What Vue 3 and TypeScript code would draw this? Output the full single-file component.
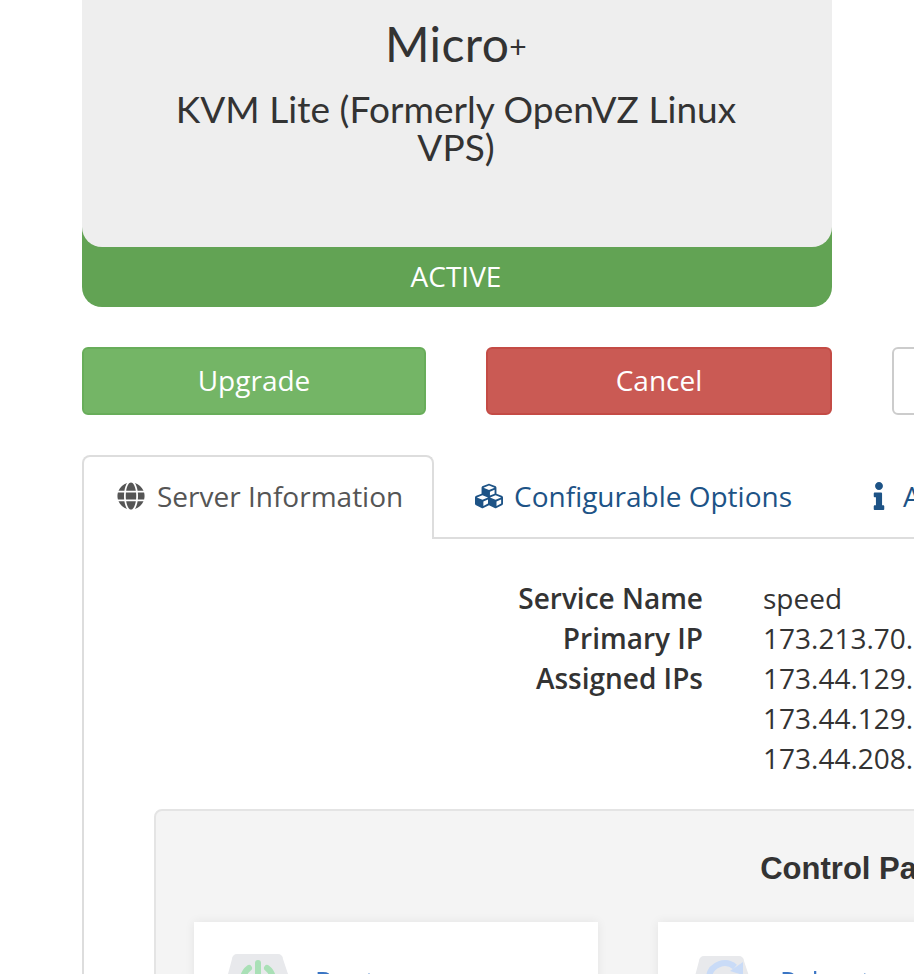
<script setup lang="ts">
const info: { label: string; value: string }[] = [
  { label: 'Service Name', value: 'speed' },
  { label: 'Primary IP', value: '173.213.70.' },
  { label: 'Assigned IPs', value: '173.44.129.' },
  { label: '', value: '173.44.129.' },
  { label: '', value: '173.44.208.' },
]
</script>

<template>
  <div class="page">
    <div class="inner">
      <section class="hero">
        <div class="hero-body">
          <h2 class="plan">Micro<span class="plus">+</span></h2>
          <h3 class="group">KVM Lite (Formerly OpenVZ Linux<br />VPS)</h3>
        </div>
        <div class="status">ACTIVE</div>
      </section>

      <div class="actions">
        <button class="btn green">Upgrade</button>
        <button class="btn red">Cancel</button>
        <button class="btn plain"></button>
      </div>

      <nav class="tabs">
        <a class="tab active">
          <svg class="ico globe" viewBox="0 0 496 512"><path fill="currentColor" d="M336.5 160C322 70.7 287.8 8 248 8s-74 62.7-88.5 152h177zM152 256c0 22.2 1.2 43.5 3.3 64h185.3c2.1-20.5 3.3-41.8 3.3-64s-1.2-43.5-3.3-64H155.3c-2.1 20.5-3.3 41.8-3.3 64zm324.7-96c-28.6-67.9-86.5-120.4-158-141.6 24.4 33.8 41.2 84.7 50 141.6h108zM177.2 18.4C105.8 39.6 47.8 92.1 19.3 160h108c8.7-56.9 25.5-107.8 49.9-141.6zM487.4 192H372.7c2.1 21 3.3 42.5 3.3 64s-1.2 43-3.3 64h114.6c5.5-20.5 8.6-41.8 8.6-64s-3.1-43.5-8.5-64zM120 256c0-21.5 1.2-43 3.3-64H8.6C3.2 212.5 0 233.8 0 256s3.2 43.5 8.6 64h114.6c-2-21-3.2-42.5-3.2-64zm39.5 96c14.5 89.3 48.7 152 88.5 152s74-62.7 88.5-152h-177zm159.3 141.6c71.4-21.2 129.4-73.7 158-141.6h-108c-8.8 56.9-25.6 107.8-50 141.6zM19.3 352c28.6 67.9 86.5 120.4 158 141.6-24.4-33.8-41.2-84.7-50-141.6h-108z" /></svg>
          <span>Server Information</span>
        </a>
        <a class="tab">
          <svg class="ico cubes" viewBox="0 0 512 512"><path fill="currentColor" d="M488.6 250.2L392 214V105.5c0-15-9.3-28.4-23.4-33.7l-100-37.5c-8.1-3.1-17.1-3.1-25.3 0l-100 37.5c-14.1 5.3-23.4 18.7-23.4 33.7V214l-96.6 36.2C9.3 255.5 0 268.9 0 283.9V394c0 13.6 7.7 26.1 19.9 32.2l100 50c10.1 5.1 22.1 5.1 32.2 0l103.9-52 103.9 52c10.1 5.1 22.1 5.1 32.2 0l100-50c12.2-6.1 19.9-18.6 19.9-32.2V283.9c0-15-9.3-28.4-23.4-33.7zM358 214.8l-85 31.9v-68.2l85-37v73.3zM154 104.1l102-38.2 102 38.2v.6l-102 41.4-102-41.4v-.6zm84 291.1l-85 42.5v-79.1l85-38.8v75.4zm0-112l-102 41.4-102-41.4v-.6l102-38.2 102 38.2v.6zm240 112l-85 42.5v-79.1l85-38.8v75.4zm0-112l-102 41.4-102-41.4v-.6l102-38.2 102 38.2v.6z" /></svg>
          <span>Configurable Options</span>
        </a>
        <a class="tab">
          <svg class="ico info" viewBox="0 0 192 512"><path fill="currentColor" d="M20 424.229h20V279.771H20c-11.046 0-20-8.954-20-20V212c0-11.046 8.954-20 20-20h112c11.046 0 20 8.954 20 20v212.229h20c11.046 0 20 8.954 20 20V492c0 11.046-8.954 20-20 20H20c-11.046 0-20-8.954-20-20v-47.771c0-11.046 8.954-20 20-20zM96 0C56.235 0 24 32.235 24 72s32.235 72 72 72 72-32.235 72-72S135.764 0 96 0z" /></svg>
          <span>Addons</span>
        </a>
      </nav>

      <div class="pane">
        <dl class="facts">
          <template v-for="(row, i) in info" :key="i">
            <dt>{{ row.label }}</dt>
            <dd>{{ row.value }}</dd>
          </template>
        </dl>

        <section class="control">
          <h3 class="control-title">Control Panel</h3>
          <div class="cards">
            <div class="card">
              <svg class="cp-ico boot" viewBox="0 0 60 60">
                <path d="M4 5a5 5 0 0 1 5-5h41a5 5 0 0 1 5 5l5 15v40H0V20z" fill="#e8e9ec" />
                <path d="M21 14a15 15 0 1 0 18 0" fill="none" stroke="#a9e0b6" stroke-width="6" stroke-linecap="round" />
                <path d="M30 9v14" fill="none" stroke="#a9e0b6" stroke-width="6" stroke-linecap="round" />
              </svg>
              <a class="cp-link">Boot</a>
            </div>
            <div class="card second">
              <svg class="cp-ico reboot" viewBox="0 0 54 60">
                <path d="M4 5a5 5 0 0 1 5-5h35a5 5 0 0 1 5 5l5 15v40H0V20z" fill="#e8e9ec" />
                <path d="M14 20a16 16 0 0 1 26-9" fill="none" stroke="#c9dbf7" stroke-width="6" />
                <path d="M35 15l13 4V6z" fill="#c9dbf7" />
              </svg>
              <a class="cp-link">Reboot</a>
            </div>
          </div>
        </section>
      </div>
    </div>
  </div>
</template>

<style>
html, body { margin: 0; overflow: hidden; background: #fff; }
</style>

<style scoped>
.page {
  width: 914px;
  height: 974px;
  overflow: hidden;
  font-family: "Open Sans", sans-serif;
  font-size: 28px;
  color: #333;
}
.inner {
  width: 1486px;
  margin-left: 82px;
}
.hero {
  width: 750px;
  background: #62a354;
  border-radius: 0 0 20px 20px;
}
.hero-body {
  height: 247px;
  box-sizing: border-box;
  padding: 17px 2px 0 0;
  background: #eee;
  border-radius: 0 0 20px 20px;
  text-align: center;
  font-family: Lato, sans-serif;
}
.plan {
  margin: 0;
  font-size: 48px;
  line-height: 54px;
  font-weight: 400;
  letter-spacing: 0.4px;
}
.plus {
  font-size: 30px;
  vertical-align: 4px;
}
.group {
  margin: 17px 0 0;
  font-size: 37px;
  line-height: 38px;
  font-weight: 400;
  letter-spacing: 0.05px;
}
.status {
  height: 60px;
  line-height: 58px;
  padding-right: 2px;
  text-align: center;
  color: #fff;
}
.actions {
  display: grid;
  grid-template-columns: 344px 346px 346px;
  gap: 60px;
  margin-top: 40px;
}
.btn {
  height: 68px;
  box-sizing: border-box;
  border-radius: 6px;
  font: inherit;
  color: #fff;
  border: 2px solid #ccc;
  padding: 0 0 2px;
}
.green { background: #74b566; border-color: #68ad5a; }
.red { background: #ca5a54; border-color: #c44b45; }
.plain { background: #fff; }
.tabs {
  display: flex;
  height: 84px;
  margin-top: 40px;
  border-bottom: 2px solid #ddd;
  box-sizing: border-box;
}
.tab {
  display: flex;
  align-items: center;
  gap: 11px;
  box-sizing: border-box;
  height: 84px;
  padding: 0 39px 4px 39px;
  color: #1d5386;
  white-space: nowrap;
  border: 2px solid transparent;
  border-bottom: 0;
}
.tab:last-child { padding-left: 38px; }
.tab.active {
  width: 352px;
  padding-left: 33px;
  gap: 12px;
  color: #555;
  background: #fff;
  border-color: #ddd;
  border-radius: 8px 8px 0 0;
}
.ico { flex: none; height: 28px; }
.globe { width: 28px; }
.cubes { width: 28px; height: 28px; }
.info { width: 12px; margin-right: 7px; }
.pane {
  border-left: 2px solid #ddd;
  padding: 39px 0 0 70px;
}
.facts {
  display: grid;
  grid-template-columns: 549px 1fr;
  column-gap: 60px;
  margin: 0;
  line-height: 40px;
}
.facts dt { font-weight: 600; text-align: right; }
.facts dd { margin: 0; white-space: nowrap; }
.control {
  margin-top: 31px;
  padding: 40px 38px 0;
  background: #f4f4f4;
  border: 2px solid #e4e4e4;
  border-radius: 8px;
  height: 400px;
}
.control-title {
  margin: 0;
  text-align: center;
  font-family: "Liberation Sans", sans-serif;
  font-size: 31px;
  line-height: 36px;
  font-weight: 700;
}
.cards {
  display: grid;
  grid-template-columns: repeat(auto-fill, 404px);
  gap: 60px;
  margin-top: 35px;
}
.card {
  display: flex;
  align-items: flex-start;
  height: 200px;
  background: #fff;
  padding: 32px 0 0 34px;
  box-sizing: border-box;
  box-shadow: 0 0 10px rgba(0, 0, 0, 0.07);
}
.card.second { padding: 34px 0 0 37px; }
.cp-ico { height: 60px; flex: none; filter: blur(0.6px); }
.boot { width: 60px; }
.reboot { width: 54px; }
.cp-link {
  margin: 12px 0 0 27px;
  color: #3a75c4;
  font-size: 27px;
  line-height: 32px;
  filter: blur(0.5px);
}
.second .cp-link { margin: 10px 0 0 31px; }
</style>
